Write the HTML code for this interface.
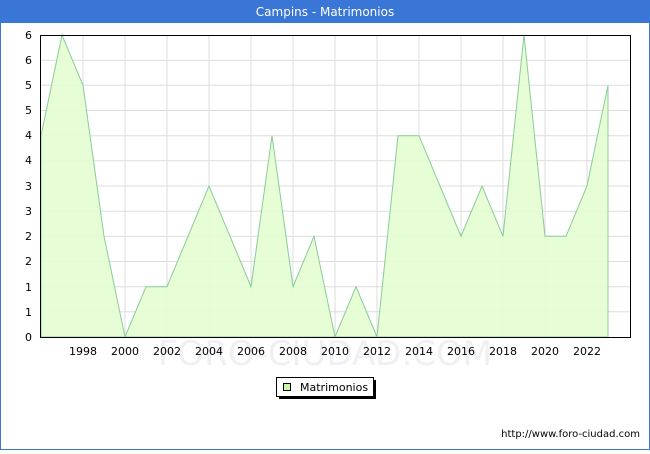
<!DOCTYPE html>
<html><head><style>
body{margin:0;width:650px;height:450px;overflow:hidden;background:#fff;font-family:"DejaVu Sans","Liberation Sans",sans-serif}
</style></head><body>
<svg width="650" height="450" xmlns="http://www.w3.org/2000/svg" font-family="DejaVu Sans, Liberation Sans, sans-serif">
<rect x="0.5" y="0.5" width="649" height="449" fill="#fff" stroke="#3a76d6"/>
<rect x="0" y="0" width="650" height="23" fill="#3a76d6"/>
<text x="325" y="16" fill="#fff" font-size="12" text-anchor="middle">Campins - Matrimonios</text>
<g stroke="#dddddd" stroke-width="1">
<line x1="40" x2="630" y1="311.8" y2="311.8"/><line x1="40" x2="630" y1="286.7" y2="286.7"/><line x1="40" x2="630" y1="261.5" y2="261.5"/><line x1="40" x2="630" y1="236.3" y2="236.3"/><line x1="40" x2="630" y1="211.2" y2="211.2"/><line x1="40" x2="630" y1="186" y2="186"/><line x1="40" x2="630" y1="160.8" y2="160.8"/><line x1="40" x2="630" y1="135.7" y2="135.7"/><line x1="40" x2="630" y1="110.5" y2="110.5"/><line x1="40" x2="630" y1="85.3" y2="85.3"/><line x1="40" x2="630" y1="60.2" y2="60.2"/>
<line y1="35" y2="337" x1="83" x2="83"/><line y1="35" y2="337" x1="125" x2="125"/><line y1="35" y2="337" x1="167" x2="167"/><line y1="35" y2="337" x1="209" x2="209"/><line y1="35" y2="337" x1="251" x2="251"/><line y1="35" y2="337" x1="293" x2="293"/><line y1="35" y2="337" x1="335" x2="335"/><line y1="35" y2="337" x1="377" x2="377"/><line y1="35" y2="337" x1="419" x2="419"/><line y1="35" y2="337" x1="461" x2="461"/><line y1="35" y2="337" x1="503" x2="503"/><line y1="35" y2="337" x1="545" x2="545"/><line y1="35" y2="337" x1="587" x2="587"/>
</g>
<text x="325" y="365" font-size="34" fill="#f0f0f4" text-anchor="middle">FORO-CIUDAD.COM</text>
<polygon fill="#e4fdd0" fill-opacity="0.9" stroke="#88cc99" stroke-width="1" points="41,337 41,135.7 62,35 83,85.3 104,236.3 125,337 146,286.7 167,286.7 188,236.3 209,186 230,236.3 251,286.7 272,135.7 293,286.7 314,236.3 335,337 356,286.7 377,337 398,135.7 419,135.7 440,186 461,236.3 482,186 503,236.3 524,35 545,236.3 566,236.3 587,186 608,85.3 608,337"/>
<rect x="40.5" y="35.5" width="590" height="302" fill="none" stroke="#000"/>
<g font-size="11" fill="#000" text-anchor="end">
<text x="32" y="341">0</text><text x="32" y="316">1</text><text x="32" y="291">1</text><text x="32" y="265">2</text><text x="32" y="240">2</text><text x="32" y="215">3</text><text x="32" y="190">3</text><text x="32" y="164">4</text><text x="32" y="139">4</text><text x="32" y="114">5</text><text x="32" y="89">5</text><text x="32" y="64">6</text><text x="32" y="39">6</text>
</g>
<g font-size="11" fill="#000" text-anchor="middle">
<text x="83" y="355">1998</text><text x="125" y="355">2000</text><text x="167" y="355">2002</text><text x="209" y="355">2004</text><text x="251" y="355">2006</text><text x="293" y="355">2008</text><text x="335" y="355">2010</text><text x="377" y="355">2012</text><text x="419" y="355">2014</text><text x="461" y="355">2016</text><text x="503" y="355">2018</text><text x="545" y="355">2020</text><text x="587" y="355">2022</text>
</g>
<rect x="279" y="380" width="97" height="19" fill="#000"/>
<rect x="276.5" y="377.5" width="97" height="19" fill="#fff" stroke="#000"/>
<rect x="283.5" y="383.5" width="7" height="7" fill="#ccf5a8" stroke="#000"/>
<text x="300" y="391" font-size="11">Matrimonios</text>
<text x="640" y="437" font-size="10" text-anchor="end">http://www.foro-ciudad.com</text>
</svg>
</body></html>
